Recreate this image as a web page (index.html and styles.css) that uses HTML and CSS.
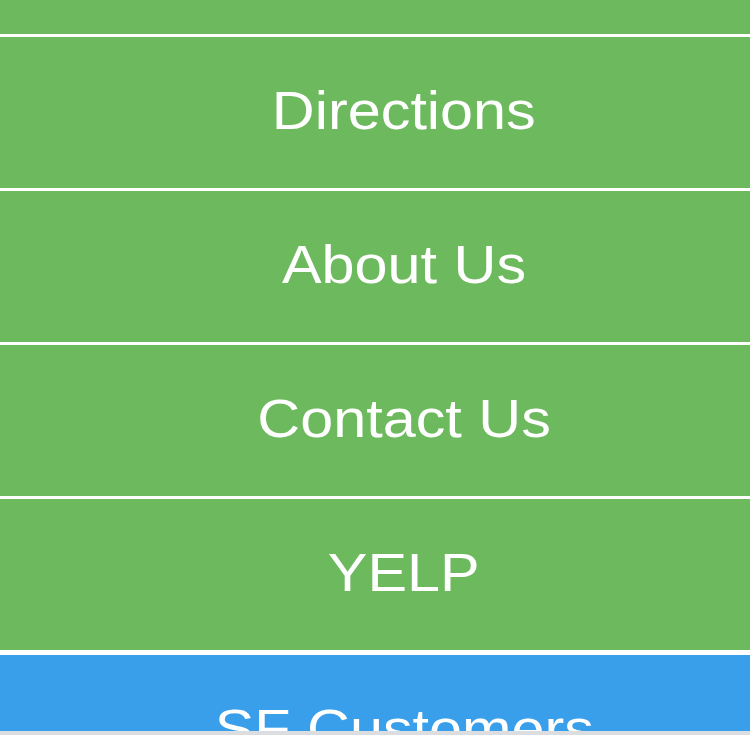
FILE: index.html
```html
<!DOCTYPE html>
<html>
<head>
<meta charset="utf-8">
<link rel="stylesheet" href="styles.css">
</head>
<body>
<div class="screen">
  <nav class="menu">
    <div class="menu-top"></div>
    <a class="menu-item"><span class="label">Directions</span></a>
    <a class="menu-item"><span class="label">About Us</span></a>
    <a class="menu-item"><span class="label">Contact Us</span></a>
    <a class="menu-item"><span class="label">YELP</span></a>
    <a class="menu-item menu-item--blue"><span class="label">SF Customers</span></a>
  </nav>
</div>
<div class="toolbar"></div>
</body>
</html>
```
FILE: styles.css
```css
html, body {
  margin: 0;
  padding: 0;
  background: #ffffff;
}
.screen {
  height: 731px;
  overflow: hidden;
  border-bottom: 4px solid #dcdde0;
}
.menu {
  display: flex;
  flex-direction: column;
}
.menu-top {
  height: 34px;
  background: #6db95d;
}
.menu-item {
  display: flex;
  align-items: center;
  justify-content: center;
  box-sizing: border-box;
  height: 154px;
  flex-shrink: 0;
  border-top: 3px solid #ffffff;
  background: #6db95d;
  color: #ffffff;
  font-family: "Liberation Sans", Arial, sans-serif;
  font-size: 53px;
  padding-left: 58px;
  padding-bottom: 4px;
  text-decoration: none;
}
.label {
  display: inline-block;
  transform: scaleX(1.12);
}
.menu-item--blue {
  border-top-width: 5px;
  height: 156px;
  background: #3a9fea;
}
.toolbar {
  height: 15px;
  background: #ffffff;
}
```
